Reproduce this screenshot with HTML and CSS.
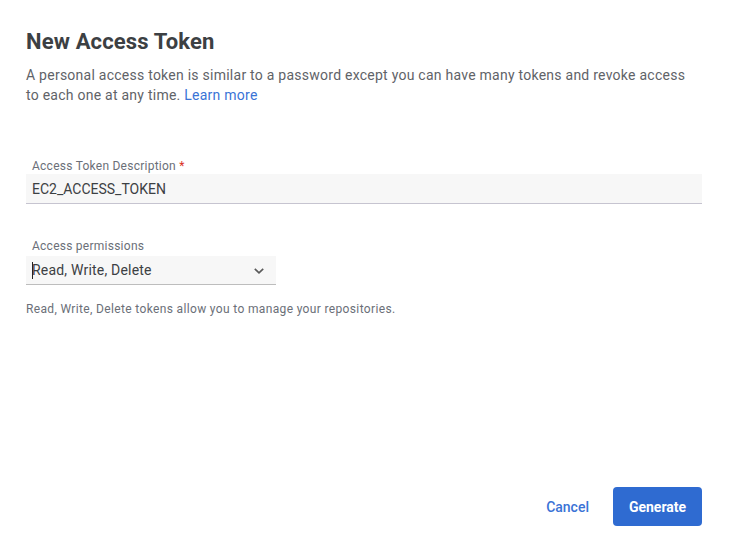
FILE: index.html
```html
<!DOCTYPE html>
<html>
<head>
<meta charset="utf-8">
<link rel="stylesheet" href="styles.css">
</head>
<body>
<div class="dialog">
  <div class="content">
    <h1 class="title">New Access Token</h1>
    <p class="intro">A personal access token is similar to a password except you can have many tokens and revoke access to each one at any time. <a class="link" href="#">Learn more</a></p>

    <div class="field field-desc">
      <label class="label">Access Token Description <span class="req">*</span></label>
      <div class="input wide">EC2_ACCESS_TOKEN</div>
    </div>

    <div class="field field-perm">
      <label class="label label-perm">Access permissions</label>
      <div class="input select"><span class="caret"></span><span class="sel-text">Read, Write, Delete</span>
        <svg class="chev" width="12" height="8" viewBox="0 0 12 8"><path d="M1.8 1.8 L6 5.8 L10.2 1.8" fill="none" stroke="#5a5a5a" stroke-width="1.7"/></svg>
      </div>
      <div class="helper">Read, Write, Delete tokens allow you to manage your repositories.</div>
    </div>
  </div>
  <div class="footer">
    <button class="btn btn-text">Cancel</button>
    <button class="btn btn-primary">Generate</button>
  </div>
</div>
</body>
</html>
```
FILE: styles.css
```css
* { box-sizing: border-box; }
html, body { margin: 0; padding: 0; background: #fff; }
body { font-family: Roboto, "Noto Sans", "Liberation Sans", sans-serif; }
.dialog {
  height: 551px;
  display: flex;
  flex-direction: column;
  padding: 29px 27px 25px 26px;
}
.content { flex: 1; }
.title {
  margin: 0;
  font-size: 22px;
  line-height: 26px;
  font-weight: 700;
  color: #3c4043;
  letter-spacing: 0.15px;
}
.intro {
  margin: 10px 0 0;
  max-width: 670px;
  font-size: 14px;
  line-height: 20px;
  color: #5f6368;
  letter-spacing: 0.25px;
}
.link { color: #3a73d6; text-decoration: none; }
.field-desc { margin-top: 54px; }
.field-perm { margin-top: 35px; }
.label {
  display: block;
  font-size: 12px;
  line-height: 15px;
  color: #6b6f78;
  padding-left: 6px;
  letter-spacing: 0.25px;
  margin-bottom: 0;
}
.label-perm { margin-bottom: 2px; }
.req { color: #d93025; }
.input {
  background: #f7f7f7;
  border-bottom: 1px solid #c6c4d0;
  height: 30px;
  font-size: 14px;
  color: #3c4043;
  padding-left: 6px;
  display: flex;
  align-items: center;
}
.select {
  width: 250px;
  height: 29px;
  position: relative;
  border-bottom-color: #bdbdbd;
  letter-spacing: 0.2px;
}
.caret {
  width: 1px;
  height: 17px;
  background: #222;
  margin-right: -1px;
}
.chev { position: absolute; right: 11px; top: 11px; }
.helper {
  font-size: 12px;
  line-height: 16px;
  color: #6b6f78;
  margin-top: 16px;
  letter-spacing: 0.35px;
}
.footer {
  display: flex;
  justify-content: flex-end;
  align-items: center;
  gap: 24px;
}
.btn {
  font-family: inherit;
  font-size: 14px;
  font-weight: 700;
  border: none;
  cursor: pointer;
  height: 39px;
  border-radius: 4px;
}
.btn-text { background: transparent; color: #3a73d6; font-weight: 500; padding: 0; }
.btn-primary { background: #2f6bd1; color: #fff; width: 89px; }
```
